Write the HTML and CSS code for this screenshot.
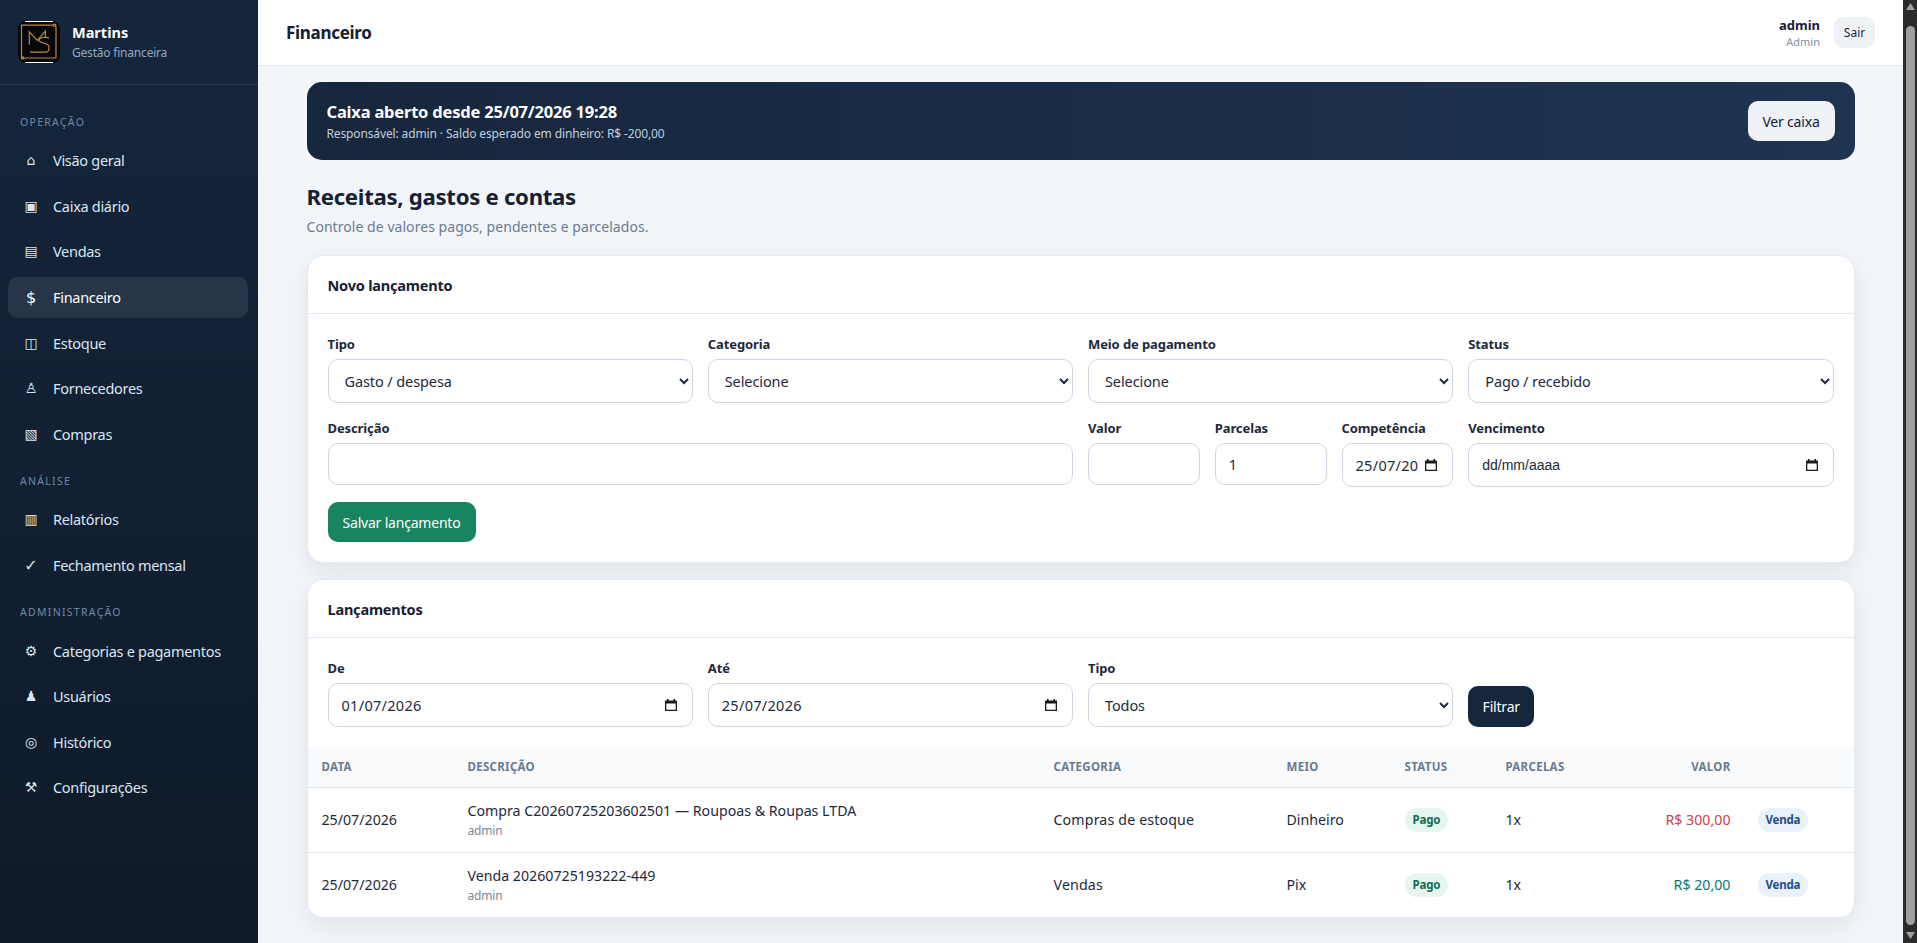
FILE: index.html
```html
<!DOCTYPE html>
<html lang="pt-BR">
<head>
<meta charset="utf-8">
<title>Financeiro</title>
<link rel="stylesheet" href="styles.css">
</head>
<body>
<div class="shell">
  <aside class="sidebar">
    <div class="brand">
      <svg class="logo" viewBox="0 0 42 42" width="42" height="42" aria-hidden="true">
        <rect width="42" height="42" rx="8" fill="#05070b"/>
        <path d="M7 .5H35M7 41.5H35" stroke="#fff" stroke-width="1"/>
        <g fill="none" stroke="#bd8842" stroke-width="1.2">
          <path d="M36 4.2H3.5V37H38V5.5"/>
          <circle cx="36.6" cy="4.3" r="1.2"/>
          <circle cx="4.6" cy="37" r="1.2"/>
          <path d="M11.3 23.5V10.8L19.3 19.4L27.4 10.2V17"/>
          <path d="M31 16.8C25 15.6 20.5 17 21 19.6C21.6 22.4 30.4 21.6 31 25.5C31.3 28.3 30.5 31.2 28 31.2H12"/>
        </g>
      </svg>
      <div class="brand-text">
        <strong class="brand-name">Martins</strong>
        <span class="brand-sub">Gestão financeira</span>
      </div>
    </div>
    <nav class="nav">
      <div class="nav-label">OPERAÇÃO</div>
      <a class="nav-item"><span class="nav-icon">⌂</span>Visão geral</a>
      <a class="nav-item"><span class="nav-icon">▣</span>Caixa diário</a>
      <a class="nav-item"><span class="nav-icon">▤</span>Vendas</a>
      <a class="nav-item active"><span class="nav-icon icon-big">$</span>Financeiro</a>
      <a class="nav-item"><span class="nav-icon">◫</span>Estoque</a>
      <a class="nav-item"><span class="nav-icon">♙</span>Fornecedores</a>
      <a class="nav-item"><span class="nav-icon">▧</span>Compras</a>
      <div class="nav-label">ANÁLISE</div>
      <a class="nav-item"><span class="nav-icon">▥</span>Relatórios</a>
      <a class="nav-item"><span class="nav-icon icon-big">✓</span>Fechamento mensal</a>
      <div class="nav-label">ADMINISTRAÇÃO</div>
      <a class="nav-item"><span class="nav-icon">⚙</span>Categorias e pagamentos</a>
      <a class="nav-item"><span class="nav-icon">♟</span>Usuários</a>
      <a class="nav-item"><span class="nav-icon">◎</span>Histórico</a>
      <a class="nav-item"><span class="nav-icon">⚒</span>Configurações</a>
    </nav>
  </aside>
  <div class="main">
    <header class="topbar">
      <div class="topbar-title">Financeiro</div>
      <div class="topbar-user">
        <div class="user-info">
          <strong class="user-name">admin</strong>
          <span class="user-role">Admin</span>
        </div>
        <button class="btn-logout">Sair</button>
      </div>
    </header>
    <main class="content">
      <section class="banner">
        <div>
          <div class="banner-title">Caixa aberto desde 25/07/2026 19:28</div>
          <div class="banner-sub">Responsável: admin · Saldo esperado em dinheiro: R$ -200,00</div>
        </div>
        <button class="btn-light">Ver caixa</button>
      </section>
      <div class="page-head">
        <h1>Receitas, gastos e contas</h1>
        <p>Controle de valores pagos, pendentes e parcelados.</p>
      </div>
      <section class="card">
        <div class="card-head">Novo lançamento</div>
        <form class="card-body form-grid">
          <label class="field span-3"><span>Tipo</span><select><option>Gasto / despesa</option></select></label>
          <label class="field span-3"><span>Categoria</span><select><option>Selecione</option></select></label>
          <label class="field span-3"><span>Meio de pagamento</span><select><option>Selecione</option></select></label>
          <label class="field span-3"><span>Status</span><select><option>Pago / recebido</option></select></label>
          <label class="field span-6"><span>Descrição</span><input type="text"></label>
          <label class="field"><span>Valor</span><input type="text"></label>
          <label class="field"><span>Parcelas</span><input type="text" value="1"></label>
          <label class="field"><span>Competência</span>
            <div class="date"><input class="date-input" type="text" value="25/07/2026">
              <svg class="cal" viewBox="0 0 14 14" aria-hidden="true"><path d="M1 2.5h12v10.5H1zM2.3 5.5v6.2h9.4V5.5z" fill-rule="evenodd"/><path d="M3 1h1.6v2H3zM9.4 1H11v2H9.4z"/></svg></div></label>
          <label class="field span-3"><span>Vencimento</span>
            <div class="date"><input class="date-input date-empty" type="text" value="dd/mm/aaaa">
              <svg class="cal" viewBox="0 0 14 14" aria-hidden="true"><path d="M1 2.5h12v10.5H1zM2.3 5.5v6.2h9.4V5.5z" fill-rule="evenodd"/><path d="M3 1h1.6v2H3zM9.4 1H11v2H9.4z"/></svg></div></label>
          <div class="span-12"><button type="button" class="btn-save">Salvar lançamento</button></div>
        </form>
      </section>
      <section class="card">
        <div class="card-head">Lançamentos</div>
        <form class="card-body form-grid">
          <label class="field span-3"><span>De</span>
            <div class="date"><input class="date-input" type="text" value="01/07/2026">
              <svg class="cal" viewBox="0 0 14 14" aria-hidden="true"><path d="M1 2.5h12v10.5H1zM2.3 5.5v6.2h9.4V5.5z" fill-rule="evenodd"/><path d="M3 1h1.6v2H3zM9.4 1H11v2H9.4z"/></svg></div></label>
          <label class="field span-3"><span>Até</span>
            <div class="date"><input class="date-input" type="text" value="25/07/2026">
              <svg class="cal" viewBox="0 0 14 14" aria-hidden="true"><path d="M1 2.5h12v10.5H1zM2.3 5.5v6.2h9.4V5.5z" fill-rule="evenodd"/><path d="M3 1h1.6v2H3zM9.4 1H11v2H9.4z"/></svg></div></label>
          <label class="field span-3"><span>Tipo</span><select><option>Todos</option></select></label>
          <div class="field-end span-3"><button type="button" class="btn-filter">Filtrar</button></div>
        </form>
        <table class="table">
          <colgroup>
            <col class="c-date"><col class="c-desc"><col class="c-cat"><col class="c-meio"><col class="c-status"><col class="c-parc"><col class="c-val"><col class="c-tag">
          </colgroup>
          <thead>
            <tr><th>Data</th><th>Descrição</th><th>Categoria</th><th>Meio</th><th>Status</th><th>Parcelas</th><th class="right">Valor</th><th></th></tr>
          </thead>
          <tbody>
            <tr>
              <td>25/07/2026</td>
              <td><div>Compra C20260725203602501 — Roupoas &amp; Roupas LTDA</div><small>admin</small></td>
              <td class="cat">Compras de estoque</td><td>Dinheiro</td>
              <td><span class="badge paid">Pago</span></td><td>1x</td>
              <td class="right neg">R$ 300,00</td>
              <td class="tag"><span class="badge sale">Venda</span></td>
            </tr>
            <tr>
              <td>25/07/2026</td>
              <td><div>Venda 20260725193222-449</div><small>admin</small></td>
              <td class="cat">Vendas</td><td>Pix</td>
              <td><span class="badge paid">Pago</span></td><td>1x</td>
              <td class="right pos">R$ 20,00</td>
              <td class="tag"><span class="badge sale">Venda</span></td>
            </tr>
          </tbody>
        </table>
      </section>
    </main>
  </div>
  <div class="scrollbar" aria-hidden="true">
    <svg class="sb-arrow sb-up" viewBox="0 0 9 7"><path d="M4.5 0L9 7H0z"/></svg>
    <div class="sb-thumb"></div>
    <svg class="sb-arrow sb-down" viewBox="0 0 9 7"><path d="M0 0H9L4.5 7z"/></svg>
  </div>
</div>
</body>
</html>
```
FILE: styles.css
```css
* { box-sizing: border-box; }
html { background: #f2f5f9; }
body {
  margin: 0;
  font-family: "Noto Sans", "Open Sans", sans-serif;
  font-size: 14px;
  color: #0f172a;
  background: #f2f5f9;
}
.shell { display: flex; min-height: 943px; }

.scrollbar {
  flex: 0 0 14px;
  display: flex;
  flex-direction: column;
  height: 100vh;
  position: sticky;
  top: 0;
  padding: 3px 2px 4px 3px;
  background: #2b2b2b;
}
.sb-arrow { display: block; flex: none; width: 9px; height: 7px; fill: #9f9f9f; }
.sb-up { margin-bottom: 16px; }
.sb-down { margin-top: 7px; }
.sb-thumb { flex: 1; border-radius: 5px; background: #9f9f9f; }

.sidebar {
  flex: 0 0 258px;
  height: 100vh;
  position: sticky;
  top: 0;
  background: linear-gradient(180deg, #15263c 0%, #0e1a29 100%);
  color: #dbe7f3;
}
.brand {
  display: flex;
  align-items: center;
  gap: 12px;
  height: 85px;
  padding: 0 18px;
  border-bottom: 1px solid rgba(255,255,255,.1);
}
.logo { flex: none; display: block; }
.brand-text { display: flex; flex-direction: column; gap: 2px; }
.brand-name { color: #fff; font-size: 14.5px; font-weight: 700; line-height: 20px; }
.brand-sub { color: #93a8bf; font-size: 12px; line-height: 18px; letter-spacing: -.2px; }
.nav { display: flex; flex-direction: column; gap: 4px; padding: 27px 10px 0 8px; }
.nav-label {
  margin: 12px 0 4px 12px;
  height: 20px;
  line-height: 20px;
  font-size: 10.5px;
  letter-spacing: 1.3px;
  color: #6e89a7;
}
.nav-label:first-child { margin-top: 0; }
.nav-item {
  display: flex;
  align-items: center;
  gap: 13px;
  height: 41.6px;
  padding: 0 14px 1px;
  border-radius: 10px;
  font-size: 14.5px;
  letter-spacing: -.3px;
  color: #d9e6f2;
}
.nav-item.active { background: rgba(255,255,255,.09); color: #fff; }
.nav-icon {
  flex: 0 0 18px;
  text-align: center;
  font-family: "DejaVu Sans", sans-serif;
  font-size: 14px;
  letter-spacing: 0;
}
.icon-big { font-size: 16px; }

.main { flex: 1; min-width: 0; }
.topbar {
  display: flex;
  align-items: center;
  justify-content: space-between;
  height: 66px;
  padding: 0 28px;
  background: #fff;
  border-bottom: 1px solid #e2e8f0;
}
.topbar-title { font-size: 17px; font-weight: 700; letter-spacing: -.3px; color: #172033; }
.topbar-user { display: flex; align-items: center; gap: 14px; }
.user-info { display: flex; flex-direction: column; align-items: flex-end; }
.user-name { font-size: 13px; line-height: 17px; color: #172033; }
.user-role { font-size: 11px; line-height: 15px; color: #8090a5; }
.btn-logout {
  width: 41px;
  height: 31px;
  padding: 0;
  border: 0;
  border-radius: 9px;
  background: #eef2f7;
  color: #1e293b;
  font: 12px "Noto Sans", sans-serif;
}
.content { max-width: 1580px; margin: 0 auto; padding: 16px 16px 27px; }
.banner {
  display: flex;
  align-items: center;
  justify-content: space-between;
  height: 78px;
  padding: 2px 20px 0;
  border-radius: 15px;
  background: linear-gradient(90deg, #16263d, #1e3450);
  color: #fff;
}
.banner-title { font-size: 16.5px; font-weight: 700; line-height: 22px; letter-spacing: -.2px; }
.banner-sub { margin-top: 1px; font-size: 12px; line-height: 20px; color: #c1cfde; letter-spacing: -.13px; }
.btn-light {
  width: 87px;
  height: 40px;
  margin-top: -2px;
  padding: 0;
  border: 0;
  border-radius: 10px;
  background: #eef2f7;
  color: #172033;
  font: 14px "Noto Sans", sans-serif;
  letter-spacing: -.2px;
}
.page-head { margin: 22px 0 18px; }
.page-head h1 { margin: 0; font-size: 22.2px; line-height: 30px; font-weight: 700; letter-spacing: -.3px; color: #172033; }
.page-head p { margin: 4px 0 0; font-size: 14px; line-height: 21px; color: #6b7b8f; letter-spacing: .05px; }

.card {
  margin-bottom: 16px;
  background: #fff;
  border: 1px solid #e4e9f0;
  border-radius: 16px;
  box-shadow: 0 8px 24px rgba(15,23,42,.08);
  overflow: hidden;
}
.card:last-child { margin-bottom: 0; }
.card-head {
  display: flex;
  align-items: center;
  height: 58px;
  padding: 0 20px;
  border-bottom: 1px solid #e2e8f0;
  font-size: 14.5px;
  font-weight: 700;
  color: #172033;
  letter-spacing: -.2px;
}
.card-body { padding: 20px; }
.form-grid { display: grid; grid-template-columns: repeat(12, 1fr); gap: 15px; }
.field { display: flex; flex-direction: column; gap: 5px; min-width: 0; }
.field > span { font-size: 13px; line-height: 20px; font-weight: 700; color: #1e293b; letter-spacing: -.1px; white-space: nowrap; }
.span-3 { grid-column: span 3; }
.span-6 { grid-column: span 6; }
.span-12 { grid-column: span 12; }
.field-end { display: flex; align-items: flex-end; }
input, select {
  width: 100%;
  border: 1px solid #ccd6e2;
  border-radius: 10px;
  background: #fff;
  color: #1e293b;
  font: 14.5px "Noto Sans", sans-serif;
  letter-spacing: -.1px;
  outline: none;
}
input { height: 42px; padding: 0 13px; }
select { height: 44px; padding: 0 12px; }
.date { position: relative; }
.date-input { height: 44px; padding-right: 33px; letter-spacing: .3px; }
.date-empty { font-family: "Liberation Sans", sans-serif; font-size: 14px; letter-spacing: 0; }
.cal { position: absolute; right: 15px; top: 15px; width: 14px; height: 14px; fill: #1a1a1a; }
.btn-save {
  display: block;
  width: 148px;
  height: 40px;
  padding: 0;
  border: 0;
  border-radius: 10px;
  background: #198462;
  color: #fff;
  font: 14px "Noto Sans", sans-serif;
  letter-spacing: -.2px;
}
.btn-filter {
  width: 66px;
  height: 41px;
  padding: 0;
  border: 0;
  border-radius: 10px;
  background: #16263d;
  color: #fff;
  font: 14px "Noto Sans", sans-serif;
  letter-spacing: -.2px;
}
.table { width: 100%; table-layout: fixed; border-collapse: collapse; }
.c-date { width: 146px; }
.c-desc { width: 586px; }
.c-cat { width: 233px; }
.c-meio { width: 118px; }
.c-status { width: 101px; }
.c-parc { width: 118px; }
.c-val { width: 135px; }
.c-tag { width: 109px; }
.table th {
  height: 40px;
  padding: 0 14px;
  background: #f8fafc;
  border-bottom: 1px solid #e2e8f0;
  text-align: left;
  text-transform: uppercase;
  font-size: 11.5px;
  font-weight: 700;
  letter-spacing: .3px;
  color: #6b7a90;
}
.table td {
  height: 65px;
  padding: 0 14px;
  border-bottom: 1px solid #e2e8f0;
  font-size: 14.2px;
  color: #1e293b;
  white-space: nowrap;
}
.table tbody tr:last-child td { border-bottom: 0; }
.table td small { display: block; margin-top: 2px; font-size: 12px; line-height: 16px; color: #7b899b; letter-spacing: -.2px; }
.table td div { line-height: 20px; }
.table .cat { letter-spacing: .15px; }
.table .right { text-align: right; }
.table .tag { padding-left: 13px; }
.neg { color: #c9434f !important; }
.pos { color: #0f766e !important; }
.badge {
  display: inline-block;
  height: 24px;
  line-height: 24px;
  padding: 0 8px;
  border-radius: 12px;
  font-size: 11.5px;
  font-weight: 700;
  letter-spacing: -.2px;
}
.paid { background: #e6f6ef; color: #0d6e55; }
.sale { background: #e9f1fb; color: #1f4f86; }
```
